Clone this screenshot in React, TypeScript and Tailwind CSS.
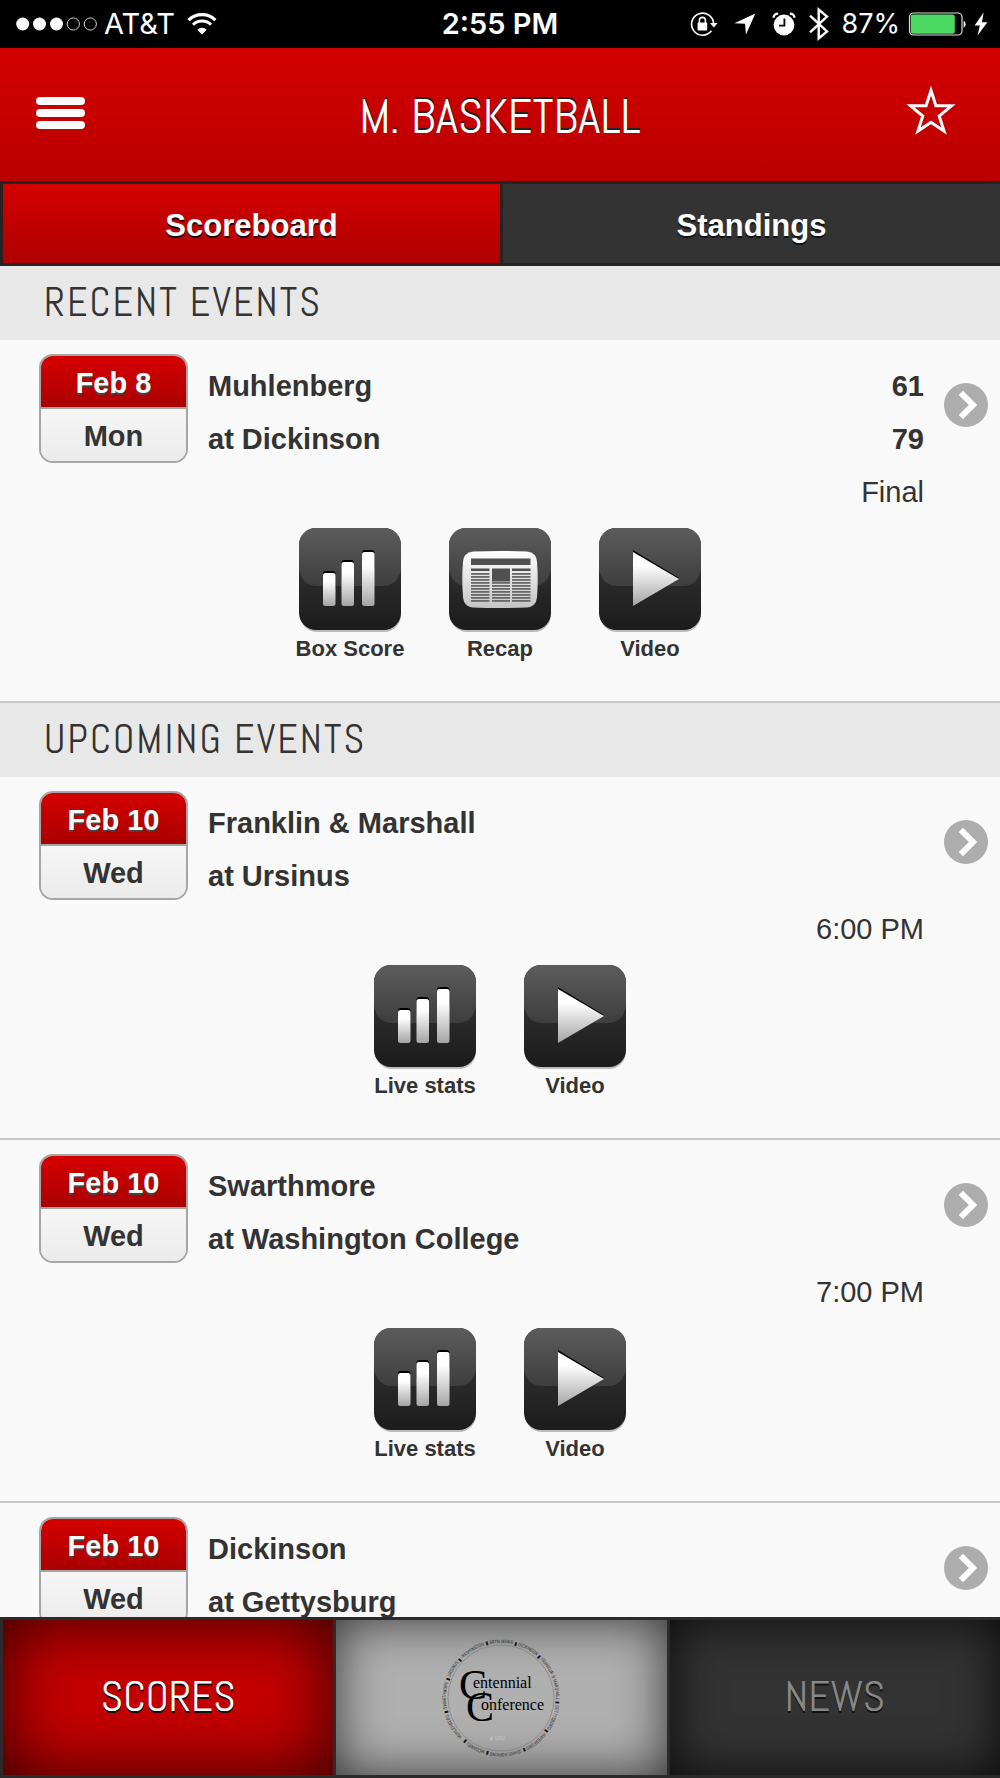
import React from 'react';

type ActionKind = 'stats' | 'recap' | 'video';

interface Action {
  kind: ActionKind;
  label: string;
}

interface GameEvent {
  id: string;
  date: string;
  day: string;
  away: string;
  home: string;
  awayScore?: number;
  homeScore?: number;
  status: string;
  actions: Action[];
}

const recentEvents: GameEvent[] = [
  {
    id: 'muhlenberg-dickinson',
    date: 'Feb 8',
    day: 'Mon',
    away: 'Muhlenberg',
    home: 'at Dickinson',
    awayScore: 61,
    homeScore: 79,
    status: 'Final',
    actions: [
      { kind: 'stats', label: 'Box Score' },
      { kind: 'recap', label: 'Recap' },
      { kind: 'video', label: 'Video' },
    ],
  },
];

const upcomingActions: Action[] = [
  { kind: 'stats', label: 'Live stats' },
  { kind: 'video', label: 'Video' },
];

const upcomingEvents: GameEvent[] = [
  {
    id: 'fandm-ursinus',
    date: 'Feb 10',
    day: 'Wed',
    away: 'Franklin & Marshall',
    home: 'at Ursinus',
    status: '6:00 PM',
    actions: upcomingActions,
  },
  {
    id: 'swarthmore-washington',
    date: 'Feb 10',
    day: 'Wed',
    away: 'Swarthmore',
    home: 'at Washington College',
    status: '7:00 PM',
    actions: upcomingActions,
  },
  {
    id: 'dickinson-gettysburg',
    date: 'Feb 10',
    day: 'Wed',
    away: 'Dickinson',
    home: 'at Gettysburg',
    status: '',
    actions: [],
  },
];

const ringNames =
  'MUHLENBERG ▮ SWARTHMORE ▮ URSINUS ▮ WASHINGTON ▮ BRYN MAWR ▮ DICKINSON ▮ FRANKLIN & MARSHALL ▮ GETTYSBURG ▮ HAVERFORD ▮ JOHNS HOPKINS ▮ MCDANIEL ▮';

const StatusBar: React.FC = () => (
  <div className="grid h-12 shrink-0 grid-cols-[1fr_auto_1fr] items-center bg-black font-['Inter',sans-serif] text-[29px] leading-8 text-white">
    <div className="flex items-center pl-4">
      <svg className="h-4 w-[82px]" viewBox="0 0 82 16" aria-hidden="true">
        <circle cx="6.7" cy="8" r="6.5" fill="#fff" />
        <circle cx="23.5" cy="8" r="6.5" fill="#fff" />
        <circle cx="40.5" cy="8" r="6.5" fill="#fff" />
        <circle cx="57.3" cy="8" r="6.1" fill="none" stroke="#ccc" />
        <circle cx="74.3" cy="8" r="6.1" fill="none" stroke="#ccc" />
      </svg>
      <span className="ml-1.5">AT&amp;T</span>
      <svg className="ml-3 h-[22px] w-[30px]" viewBox="0 0 30 22" fill="none" stroke="#fff" aria-hidden="true">
        <path d="M1.6 7.2a19 19 0 0 1 26.8 0" strokeWidth="3.2" />
        <path d="M6 11.7a12.7 12.7 0 0 1 18 0" strokeWidth="3" />
        <path d="M15 21.5 10.3 16.7a6.7 6.7 0 0 1 9.4 0z" fill="#fff" stroke="none" />
      </svg>
    </div>
    <span className="font-semibold">2:55 PM</span>
    <div className="flex items-center justify-end pr-3 text-[27px]">
      <svg className="h-6 w-7" viewBox="0 0 28 24" aria-hidden="true">
        <path d="M21.4 18.8A11 11 0 1 1 23.6 12" fill="none" stroke="#fff" strokeWidth="1.6" />
        <path d="M20 11h7.6l-3.8 4.6z" fill="#fff" />
        <rect x="7.6" y="10.6" width="9.6" height="8" rx="1" fill="#fff" />
        <path d="M9.4 11V8.4a3 3 0 0 1 6 0V11" fill="none" stroke="#fff" strokeWidth="1.6" />
      </svg>
      <svg className="ml-4 h-[22px] w-[22px]" viewBox="0 0 22 22" aria-hidden="true">
        <path d="M21.3.6.4 10.2 11 10.8 12 21.4z" fill="#fff" />
      </svg>
      <svg className="ml-4 h-6 w-6" viewBox="0 0 24 24" aria-hidden="true">
        <circle cx="12" cy="13" r="10.4" fill="#fff" />
        <path d="M1.4 5.8A5 5 0 0 1 6.2 1.6M22.6 5.8a5 5 0 0 0-4.8-4.2" fill="none" stroke="#fff" strokeWidth="2.2" />
        <path d="M12.4 6.4v7.2H7" fill="none" stroke="#000" strokeWidth="1.8" />
      </svg>
      <svg className="ml-3 h-[34px] w-[22px]" viewBox="0 0 22 34" aria-hidden="true">
        <path d="m2 8.6 17 15.8-8.3 7V2.6l8.3 7L2 25.4" fill="none" stroke="#fff" strokeWidth="2.4" />
      </svg>
      <span className="ml-3">87%</span>
      <svg className="ml-2 h-6 w-[60px]" viewBox="0 0 60 24" aria-hidden="true">
        <rect x="1.5" y="1" width="52.5" height="22" rx="4" fill="none" stroke="#ddd" strokeWidth="1.2" />
        <rect x="2.8" y="2.4" width="44" height="19.4" rx="2.4" fill="#4cd964" />
        <path d="M55.6 8.4a4.6 4.6 0 0 1 0 7.6z" fill="#fff" />
      </svg>
      <svg className="ml-1.5 h-6 w-[14px]" viewBox="0 0 14 24" aria-hidden="true">
        <path d="M9.6.6.6 13.4h5.2L3.6 23.6l9.8-13.4H8z" fill="#fff" />
      </svg>
    </div>
  </div>
);

const Header: React.FC = () => (
  <header className="grid h-[133px] shrink-0 grid-cols-[1fr_auto_1fr] items-center bg-gradient-to-b from-[#d50000] to-[#b90000] px-9">
    <button type="button" aria-label="Menu" className="flex w-[49px] flex-col gap-1 pb-1">
      <span className="h-2 w-full rounded-full bg-white"></span>
      <span className="h-2 w-full rounded-full bg-white"></span>
      <span className="h-2 w-full rounded-full bg-white"></span>
    </button>
    <h1 className="pt-1 font-['Abel','Liberation_Sans_Narrow',sans-serif] text-[48px] leading-[56px] text-white [text-shadow:0_-2px_0_#222]">
      M. BASKETBALL
    </h1>
    <button type="button" aria-label="Favorite" className="mr-2 justify-self-end pb-2">
      <svg className="h-[50px] w-[50px]" viewBox="0 0 50 50" aria-hidden="true">
        <path
          d="M25 4.5 29.9 19.8 45.5 19.8 33.2 30 38 45 25 36.2 12 45 16.8 30 4.5 19.8 20.1 19.8z"
          fill="none"
          stroke="#fff"
          strokeWidth="3"
        />
      </svg>
    </button>
  </header>
);

const Tabs: React.FC = () => (
  <div
    role="tablist"
    className="flex h-[85px] shrink-0 border-y-[3px] border-[#272324] bg-[#333] text-[31px] font-bold text-white"
  >
    <button
      type="button"
      role="tab"
      aria-selected="true"
      className="flex-1 border-x-[3px] border-[#272324] bg-gradient-to-b from-[#d50000] to-[#ae0000] pt-1.5 [text-shadow:0_2px_0_#111]"
    >
      Scoreboard
    </button>
    <button type="button" role="tab" aria-selected="false" className="flex-1 pt-1.5 [text-shadow:0_2px_0_#111]">
      Standings
    </button>
  </div>
);

const SectionTitle: React.FC<{ children: React.ReactNode }> = ({ children }) => (
  <h2 className="h-[74px] bg-[#e8e8e8] pl-11 font-['Abel','Liberation_Sans_Narrow',sans-serif] text-[40px] leading-[74px] tracking-wider text-[#333]">
    {children}
  </h2>
);

const DateCard: React.FC<{ date: string; day: string }> = ({ date, day }) => (
  <div className="h-[109px] w-[149px] shrink-0 overflow-hidden rounded-[14px] border-2 border-[#a5a5a5] text-center leading-[54px]">
    <div className="h-[53px] border-b-2 border-[#a5a5a5] bg-gradient-to-b from-[#d50000] to-[#aa0000] text-white [text-shadow:0_2px_0_#444]">
      {date}
    </div>
    <div className="h-[52px] bg-gradient-to-b from-[#f6f6f6] to-[#ebebeb]">{day}</div>
  </div>
);

const ActionGlyph: React.FC<{ kind: ActionKind }> = ({ kind }) => {
  if (kind === 'stats') {
    return (
      <g>
        {[
          { x: 24, y: 45 },
          { x: 42.5, y: 34 },
          { x: 63, y: 24 },
        ].map((bar) => (
          <g key={bar.x}>
            <rect x={bar.x} y={bar.y - 2} width="12.5" height="20" rx="3" fill="#000" />
            <rect x={bar.x} y={bar.y} width="12.5" height={78 - bar.y} rx="2.5" fill="url(#glyph)" />
          </g>
        ))}
      </g>
    );
  }
  if (kind === 'recap') {
    return (
      <g>
        <path
          d="M24 23.5q27-1 54 0 9 1 10 10 1.4 18 0 36-1 9-10 10-27 1-54 0-9-1-10-10-1.4-18 0-36 1-9 10-10z"
          fill="url(#paper)"
        />
        <rect x="22" y="30.5" width="59.5" height="6.5" fill="#505050" />
        <rect x="22" y="40.5" width="18.5" height="2.5" fill="#505050" />
        <rect x="63" y="40.5" width="18.5" height="2.5" fill="#505050" />
        {[45, 48, 51, 54, 57, 60, 63, 66, 69, 72].map((y) => (
          <g key={y} fill="#686868">
            <rect x="22" y={y} width="18.5" height="1.8" />
            <rect x="43" y={y} width="18" height="1.8" />
            <rect x="63" y={y} width="18.5" height="1.8" />
          </g>
        ))}
        <rect x="43" y="40.5" width="18" height="13" fill="#505050" />
      </g>
    );
  }
  return (
    <g>
      <path d="M34 22 80 50 34 76z" fill="#000" />
      <path d="M34 24 80 51 34 78z" fill="url(#glyph)" />
    </g>
  );
};

const ActionLink: React.FC<{ action: Action }> = ({ action }) => (
  <a href="#" className="flex w-[150px] flex-col items-center text-[22px] font-bold leading-[38px]">
    <svg className="h-[102px] w-[102px] overflow-visible" viewBox="0 0 102 102" aria-hidden="true">
      <rect x="1" y="2" width="101" height="102" rx="17" fill="#bbb" />
      <rect width="102" height="102" rx="17" fill="url(#tile)" />
      <path d="M0 17A17 17 0 0 1 17 0H85A17 17 0 0 1 102 17V42Q98 58 84 58H18Q4 58 0 42z" fill="url(#gloss)" />
      <ActionGlyph kind={action.kind} />
    </svg>
    {action.label}
  </a>
);

const EventRow: React.FC<{ event: GameEvent }> = ({ event }) => (
  <li className="border-b-2 border-[#c8c8c8] pb-[33px] pt-[14px]">
    <div className="flex pl-[39px] pr-3 text-[29px] font-bold">
      <DateCard date={event.date} day={event.day} />
      <div className="ml-5 flex-1 pt-1.5 leading-[53px]">
        <div className="flex justify-between">
          <span>{event.away}</span>
          <span>{event.awayScore}</span>
        </div>
        <div className="flex justify-between">
          <span>{event.home}</span>
          <span>{event.homeScore}</span>
        </div>
        {event.status && <div className="text-right font-normal">{event.status}</div>}
      </div>
      <a href="#" aria-label={`${event.away} ${event.home}`} className="ml-5 mt-[29px] h-11 w-11">
        <svg className="h-11 w-11" viewBox="0 0 44 44" aria-hidden="true">
          <circle cx="22" cy="22" r="22" fill="#adadad" />
          <path d="M16.8 9.8 29 22 16.8 34.2" fill="none" stroke="#fff" strokeWidth="6" />
        </svg>
      </a>
    </div>
    {event.actions.length > 0 && (
      <div className="mt-[9px] flex justify-center">
        {event.actions.map((action) => (
          <ActionLink key={action.label} action={action} />
        ))}
      </div>
    )}
  </li>
);

const ConferenceLogo: React.FC = () => (
  <svg className="h-[120px] w-[120px]" viewBox="0 0 120 120" aria-hidden="true">
    <defs>
      <path id="ring" d="M21.1 98.9A55 55 0 1 1 98.9 98.9 55 55 0 0 1 21.1 98.9" />
    </defs>
    <circle cx="60" cy="60" r="53" fill="none" stroke="#777" strokeWidth="0.6" />
    <text className="font-['Abel',sans-serif]" fontSize="5" fill="#111">
      <textPath href="#ring">{ringNames}</textPath>
    </text>
    <g className="font-['Liberation_Serif',serif]" fill="#000" fontSize="16">
      <text x="18" y="61" fontSize="42">C</text>
      <text x="32" y="50">entennial</text>
      <text x="25" y="83" fontSize="42">C</text>
      <text x="40" y="72">onference</text>
    </g>
    <text className="font-['Liberation_Sans',sans-serif]" x="49" y="102" fontSize="5" fill="#c4c4c4">
      ▮ 1992
    </text>
  </svg>
);

const BottomNav: React.FC = () => (
  <nav className="grid h-[161px] shrink-0 grid-cols-3 gap-[3px] border-[3px] border-r-0 border-[#2b2b2b] bg-[#2b2b2b] font-['Abel','Liberation_Sans_Narrow',sans-serif] text-[43px] [text-shadow:0_2px_0_#111]">
    <a
      href="#"
      className="flex items-center justify-center bg-[#c60000] text-white shadow-[inset_0_0_70px_#300000]"
    >
      SCORES
    </a>
    <a
      href="#"
      aria-label="Centennial Conference"
      className="flex items-center justify-center bg-[#b0b0b0] shadow-[inset_0_0_50px_#333] [text-shadow:none]"
    >
      <ConferenceLogo />
    </a>
    <a
      href="#"
      className="flex items-center justify-center bg-[#333] text-[#888] shadow-[inset_0_0_50px_#0a0a0a]"
    >
      NEWS
    </a>
  </nav>
);

export default function App() {
  return (
    <div className="flex h-screen flex-col bg-[#f9f9f9] font-['Liberation_Sans',Arial,sans-serif] text-[#333]">
      {/* Gradients shared by the action tiles */}
      <svg className="absolute h-0 w-0" aria-hidden="true">
        <defs>
          <linearGradient id="tile" x1="0" y1="0" x2="0" y2="1">
            <stop offset="0.5" stopColor="#2b2b2b" />
            <stop offset="1" stopColor="#1b1b1b" />
          </linearGradient>
          <linearGradient id="gloss" x1="0" y1="0" x2="0" y2="1">
            <stop offset="0" stopColor="#5c5c5c" />
            <stop offset="1" stopColor="#3e3e3e" />
          </linearGradient>
          <linearGradient id="glyph" x1="0" y1="0" x2="0" y2="1">
            <stop offset="0.25" stopColor="#fff" />
            <stop offset="1" stopColor="#a4a4a4" />
          </linearGradient>
          <linearGradient id="paper" x1="0" y1="0" x2="0" y2="1">
            <stop offset="0" stopColor="#fff" />
            <stop offset="1" stopColor="#c4c4c4" />
          </linearGradient>
        </defs>
      </svg>
      <StatusBar />
      <Header />
      <Tabs />
      <main className="min-h-0 flex-1 overflow-y-auto [scrollbar-width:none]">
        <section>
          <SectionTitle>RECENT EVENTS</SectionTitle>
          <ul>
            {recentEvents.map((event) => (
              <EventRow key={event.id} event={event} />
            ))}
          </ul>
        </section>
        <section>
          <SectionTitle>UPCOMING EVENTS</SectionTitle>
          <ul>
            {upcomingEvents.map((event) => (
              <EventRow key={event.id} event={event} />
            ))}
          </ul>
        </section>
      </main>
      <BottomNav />
    </div>
  );
}
